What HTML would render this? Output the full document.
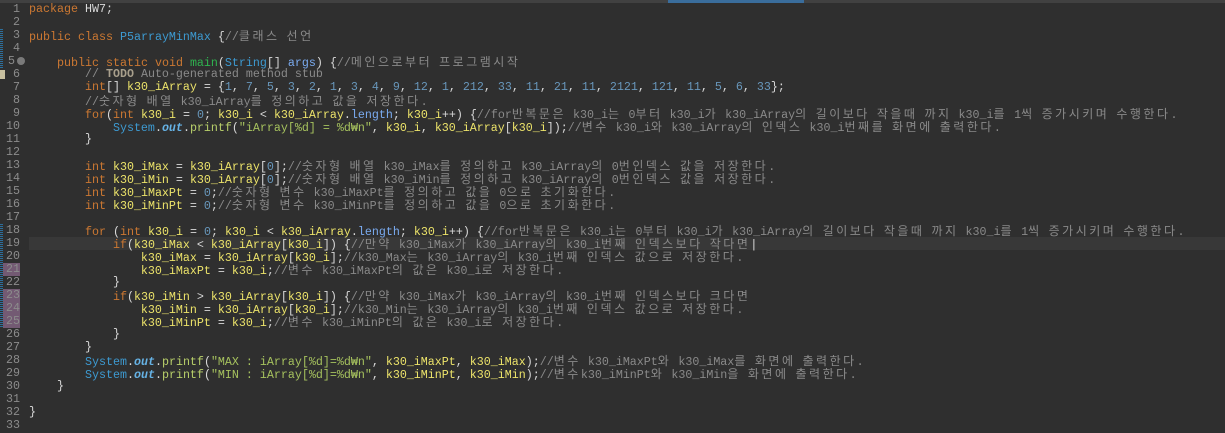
<!DOCTYPE html>
<html><head><meta charset="utf-8"><style>
html,body{margin:0;padding:0;background:#2f2f2f;width:1225px;height:433px;overflow:hidden}
#top{position:absolute;left:0;top:0;width:1225px;height:3px;background:#414141}
#tab{position:absolute;left:668px;top:0;width:136px;height:3px;background:#3a6d9c}
.ln{position:absolute;left:0;width:20px;text-align:right;font:11.67px "Liberation Mono",monospace;color:#8c8c8c;height:13px;line-height:13px}
.pm{background:#735a73;left:3px;width:17px}
.c{position:absolute;left:29px;white-space:pre;font:11.67px "Liberation Mono",monospace;color:#d9d9d9;height:13px;line-height:13px}
b{font-weight:normal;font-family:"Noto Sans CJK KR",sans-serif;font-size:12px;letter-spacing:2.5px}
.kw{color:#cc7832}.v{color:#ece36a}.n{color:#6897bb}.cm{color:#8a8a8a}.s{color:#a6c25e}.t{color:#3d9ad1}.g{color:#2fb34f}.p{color:#7aabf0}.f{color:#b8cf6a}
.o{color:#66b3e6;font-style:italic;font-weight:bold}
#cur{position:absolute;left:29px;top:237px;width:1196px;height:13px;background:#383838}
.mk{position:absolute;left:0;width:3px;background:repeating-linear-gradient(#2d6e9a 0 1px,#2f2f2f 1px 2px)}
</style></head><body>
<div id="top"></div><div id="tab"></div>
<div id="cur"></div>
<div class="mk" style="top:29px;height:39px"></div>
<div class="mk" style="top:224px;height:104px"></div>
<div style="position:absolute;left:17px;top:57px;width:8px;height:8px;border-radius:50%;background:#7a7a7a"></div>
<div style="position:absolute;left:0;top:70px;width:5px;height:9px;background:#c8c0a0"></div>

<div class="ln" style="top:3px">1</div>
<div class="ln" style="top:16px">2</div>
<div class="ln" style="top:29px">3</div>
<div class="ln" style="top:42px">4</div>
<div class="ln" style="top:55px;width:15px">5</div>
<div class="ln" style="top:68px">6</div>
<div class="ln" style="top:81px">7</div>
<div class="ln" style="top:94px">8</div>
<div class="ln" style="top:107px">9</div>
<div class="ln" style="top:120px">10</div>
<div class="ln" style="top:133px">11</div>
<div class="ln" style="top:146px">12</div>
<div class="ln" style="top:159px">13</div>
<div class="ln" style="top:172px">14</div>
<div class="ln" style="top:185px">15</div>
<div class="ln" style="top:198px">16</div>
<div class="ln" style="top:211px">17</div>
<div class="ln" style="top:224px">18</div>
<div class="ln" style="top:237px">19</div>
<div class="ln" style="top:250px">20</div>
<div class="ln pm" style="top:263px">21</div>
<div class="ln" style="top:276px">22</div>
<div class="ln pm" style="top:289px">23</div>
<div class="ln pm" style="top:302px">24</div>
<div class="ln pm" style="top:315px">25</div>
<div class="ln" style="top:328px">26</div>
<div class="ln" style="top:341px">27</div>
<div class="ln" style="top:354px">28</div>
<div class="ln" style="top:367px">29</div>
<div class="ln" style="top:380px">30</div>
<div class="ln" style="top:393px">31</div>
<div class="ln" style="top:406px">32</div>
<div class="ln" style="top:419px">33</div>

<div class="c" style="top:3px"><span class="kw">package</span> HW7;</div>
<div class="c" style="top:29px"><span class="kw">public</span> <span class="kw">class</span> <span class="t">P5arrayMinMax</span> {<span class="cm">//<b>클래스</b> <b>선언</b></span></div>
<div class="c" style="top:55px">    <span class="kw">public</span> <span class="kw">static</span> <span class="kw">void</span> <span class="g">main</span>(<span class="t">String</span>[] <span class="p">args</span>) {<span class="cm">//<b>메인으로부터</b> <b>프로그램시작</b></span></div>
<div class="c" style="top:68px">        <span class="cm">// <span style="color:#a89f8c;font-weight:bold">TODO</span> Auto-generated method stub</span></div>
<div class="c" style="top:81px">        <span class="kw">int</span>[] <span class="v">k30_iArray</span> = {<span class="n">1</span>, <span class="n">7</span>, <span class="n">5</span>, <span class="n">3</span>, <span class="n">2</span>, <span class="n">1</span>, <span class="n">3</span>, <span class="n">4</span>, <span class="n">9</span>, <span class="n">12</span>, <span class="n">1</span>, <span class="n">212</span>, <span class="n">33</span>, <span class="n">11</span>, <span class="n">21</span>, <span class="n">11</span>, <span class="n">2121</span>, <span class="n">121</span>, <span class="n">11</span>, <span class="n">5</span>, <span class="n">6</span>, <span class="n">33</span>};</div>
<div class="c" style="top:94px">        <span class="cm">//<b>숫자형</b> <b>배열</b> k30_iArray<b>를</b> <b>정의하고</b> <b>값을</b> <b>저장한다</b>.</span></div>
<div class="c" style="top:107px">        <span class="kw">for</span>(<span class="kw">int</span> <span class="v">k30_i</span> = <span class="n">0</span>; <span class="v">k30_i</span> &lt; <span class="v">k30_iArray</span>.<span class="p">length</span>; <span class="v">k30_i</span>++) {<span class="cm">//for<b>반복문은</b> k30_i<b>는</b> 0<b>부터</b> k30_i<b>가</b> k30_iArray<b>의</b> <b>길이보다</b> <b>작을때</b> <b>까지</b> k30_i<b>를</b> 1<b>씩</b> <b>증가시키며</b> <b>수행한다</b>.</span></div>
<div class="c" style="top:120px">            <span class="t">System</span>.<span class="o">out</span>.<span class="f">printf</span>(<span class="s">"iArray[%d] = %d₩n"</span>, <span class="v">k30_i</span>, <span class="v">k30_iArray</span>[<span class="v">k30_i</span>]);<span class="cm">//<b>변수</b> k30_i<b>와</b> k30_iArray<b>의</b> <b>인덱스</b> k30_i<b>번째를</b> <b>화면에</b> <b>출력한다</b>.</span></div>
<div class="c" style="top:133px">        }</div>
<div class="c" style="top:159px">        <span class="kw">int</span> <span class="v">k30_iMax</span> = <span class="v">k30_iArray</span>[<span class="n">0</span>];<span class="cm">//<b>숫자형</b> <b>배열</b> k30_iMax<b>를</b> <b>정의하고</b> k30_iArray<b>의</b> 0<b>번인덱스</b> <b>값을</b> <b>저장한다</b>.</span></div>
<div class="c" style="top:172px">        <span class="kw">int</span> <span class="v">k30_iMin</span> = <span class="v">k30_iArray</span>[<span class="n">0</span>];<span class="cm">//<b>숫자형</b> <b>배열</b> k30_iMin<b>를</b> <b>정의하고</b> k30_iArray<b>의</b> 0<b>번인덱스</b> <b>값을</b> <b>저장한다</b>.</span></div>
<div class="c" style="top:185px">        <span class="kw">int</span> <span class="v">k30_iMaxPt</span> = <span class="n">0</span>;<span class="cm">//<b>숫자형</b> <b>변수</b> k30_iMaxPt<b>를</b> <b>정의하고</b> <b>값을</b> 0<b>으로</b> <b>초기화한다</b>.</span></div>
<div class="c" style="top:198px">        <span class="kw">int</span> <span class="v">k30_iMinPt</span> = <span class="n">0</span>;<span class="cm">//<b>숫자형</b> <b>변수</b> k30_iMinPt<b>를</b> <b>정의하고</b> <b>값을</b> 0<b>으로</b> <b>초기화한다</b>.</span></div>
<div class="c" style="top:224px">        <span class="kw">for</span> (<span class="kw">int</span> <span class="v">k30_i</span> = <span class="n">0</span>; <span class="v">k30_i</span> &lt; <span class="v">k30_iArray</span>.<span class="p">length</span>; <span class="v">k30_i</span>++) {<span class="cm">//for<b>반복문은</b> k30_i<b>는</b> 0<b>부터</b> k30_i<b>가</b> k30_iArray<b>의</b> <b>길이보다</b> <b>작을때</b> <b>까지</b> k30_i<b>를</b> 1<b>씩</b> <b>증가시키며</b> <b>수행한다</b>.</span></div>
<div class="c" style="top:237px">            <span class="kw">if</span>(<span class="v">k30_iMax</span> &lt; <span class="v">k30_iArray</span>[<span class="v">k30_i</span>]) {<span class="cm">//<b>만약</b> k30_iMax<b>가</b> k30_iArray<b>의</b> k30_i<b>번째</b> <b>인덱스보다</b> <b>작다면</b></span><span style="color:#ddd">|</span></div>
<div class="c" style="top:250px">                <span class="v">k30_iMax</span> = <span class="v">k30_iArray</span>[<span class="v">k30_i</span>];<span class="cm">//k30_Max<b>는</b> k30_iArray<b>의</b> k30_i<b>번째</b> <b>인덱스</b> <b>값으로</b> <b>저장한다</b>.</span></div>
<div class="c" style="top:263px">                <span class="v">k30_iMaxPt</span> = <span class="v">k30_i</span>;<span class="cm">//<b>변수</b> k30_iMaxPt<b>의</b> <b>값은</b> k30_i<b>로</b> <b>저장한다</b>.</span></div>
<div class="c" style="top:276px">            }</div>
<div class="c" style="top:289px">            <span class="kw">if</span>(<span class="v">k30_iMin</span> &gt; <span class="v">k30_iArray</span>[<span class="v">k30_i</span>]) {<span class="cm">//<b>만약</b> k30_iMax<b>가</b> k30_iArray<b>의</b> k30_i<b>번째</b> <b>인덱스보다</b> <b>크다면</b></span></div>
<div class="c" style="top:302px">                <span class="v">k30_iMin</span> = <span class="v">k30_iArray</span>[<span class="v">k30_i</span>];<span class="cm">//k30_Min<b>는</b> k30_iArray<b>의</b> k30_i<b>번째</b> <b>인덱스</b> <b>값으로</b> <b>저장한다</b>.</span></div>
<div class="c" style="top:315px">                <span class="v">k30_iMinPt</span> = <span class="v">k30_i</span>;<span class="cm">//<b>변수</b> k30_iMinPt<b>의</b> <b>값은</b> k30_i<b>로</b> <b>저장한다</b>.</span></div>
<div class="c" style="top:328px">            }</div>
<div class="c" style="top:341px">        }</div>
<div class="c" style="top:354px">        <span class="t">System</span>.<span class="o">out</span>.<span class="f">printf</span>(<span class="s">"MAX : iArray[%d]=%d₩n"</span>, <span class="v">k30_iMaxPt</span>, <span class="v">k30_iMax</span>);<span class="cm">//<b>변수</b> k30_iMaxPt<b>와</b> k30_iMax<b>를</b> <b>화면에</b> <b>출력한다</b>.</span></div>
<div class="c" style="top:367px">        <span class="t">System</span>.<span class="o">out</span>.<span class="f">printf</span>(<span class="s">"MIN : iArray[%d]=%d₩n"</span>, <span class="v">k30_iMinPt</span>, <span class="v">k30_iMin</span>);<span class="cm">//<b>변수</b>k30_iMinPt<b>와</b> k30_iMin<b>을</b> <b>화면에</b> <b>출력한다</b>.</span></div>
<div class="c" style="top:380px">    }</div>
<div class="c" style="top:406px">}</div>
</body></html>
